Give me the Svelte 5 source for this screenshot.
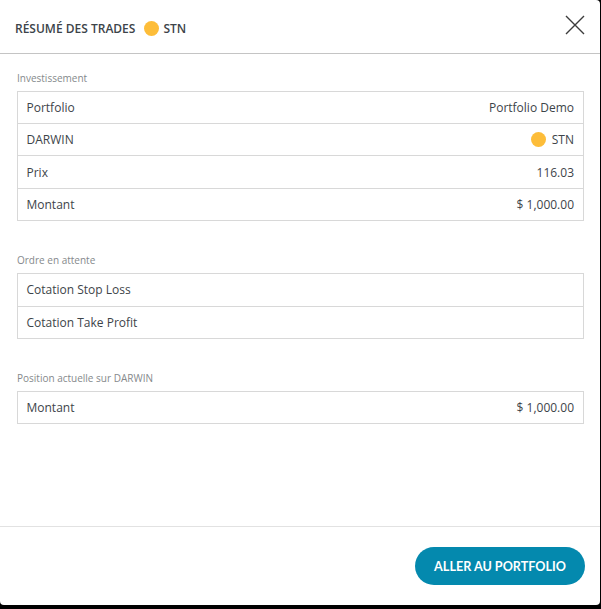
<script>
	const sections = [
		{
			title: 'Investissement',
			rows: [
				{ label: 'Portfolio', value: 'Portfolio Demo' },
				{ label: 'DARWIN', value: 'STN', dot: true },
				{ label: 'Prix', value: '116.03' },
				{ label: 'Montant', value: '$ 1,000.00' }
			]
		},
		{
			title: 'Ordre en attente',
			rows: [
				{ label: 'Cotation Stop Loss', value: '' },
				{ label: 'Cotation Take Profit', value: '' }
			]
		},
		{
			title: 'Position actuelle sur DARWIN',
			rows: [{ label: 'Montant', value: '$ 1,000.00' }]
		}
	];
</script>

<div class="modal">
	<header class="modal-header">
		<div class="title">
			<h2>RÉSUMÉ DES TRADES</h2>
			<span class="dot head-dot"></span>
			<span class="head-name">STN</span>
		</div>
		<button class="close" aria-label="Fermer">
			<svg width="20" height="20" viewBox="0 0 20 20">
				<path d="M1 1 L19 19 M19 1 L1 19" stroke="#3c3c3c" stroke-width="1.4" fill="none" />
			</svg>
		</button>
	</header>

	<div class="modal-body">
		{#each sections as section}
			<section class="group">
				<h3>{section.title}</h3>
				<div class="table">
					{#each section.rows as row}
						<div class="row">
							<span>{row.label}</span>
							<span class="value">
								{#if row.dot}<span class="dot"></span>{/if}
								{row.value}
							</span>
						</div>
					{/each}
				</div>
			</section>
		{/each}
	</div>

	<footer class="modal-footer">
		<button class="primary">ALLER AU PORTFOLIO</button>
	</footer>
</div>

<style>
	:global(body) {
		background: #000;
		font-family: 'Open Sans', sans-serif;
	}

	.modal {
		width: 600px;
		height: 605px;
		background: #fff;
		border-radius: 0 4px 4px 4px;
		display: flex;
		flex-direction: column;
		color: #3d4449;
	}

	.modal-header {
		height: 53px;
		border-bottom: 1px solid #c4c4c4;
		display: flex;
		align-items: center;
		justify-content: space-between;
		padding: 0 15px;
		flex-shrink: 0;
	}

	.title {
		display: flex;
		align-items: center;
		padding-top: 4px;
	}

	h2 {
		margin: 0;
		font-size: 12px;
		font-weight: 600;
		color: #3d4449;
	}

	.dot {
		width: 15px;
		height: 15px;
		border-radius: 50%;
		background: #fdbd39;
		display: inline-block;
	}

	.head-dot {
		margin-left: 9px;
	}

	.head-name {
		margin-left: 4px;
		font-size: 12px;
		font-weight: 600;
	}

	.close {
		background: none;
		border: none;
		padding: 0;
		width: 20px;
		height: 20px;
		display: flex;
		margin-bottom: 3px;
	}

	.modal-body {
		flex: 1;
		padding: 16.8px 16px 0 17px;
	}

	.group {
		margin-bottom: 32.1px;
	}

	h3 {
		margin: 0 0 5px;
		font-size: 10px;
		line-height: 15px;
		font-weight: 400;
		color: #85898c;
	}

	.table {
		border: 1px solid #d8d8d8;
		border-bottom: none;
	}

	.row {
		height: 31.33px;
		border-bottom: 1px solid #d8d8d8;
		display: flex;
		align-items: center;
		justify-content: space-between;
		padding: 0 9px 0 8.5px;
		font-size: 12px;
	}

	.value {
		display: flex;
		align-items: center;
		gap: 6px;
	}

	.modal-footer {
		height: 78px;
		border-top: 1px solid #e2e2e2;
		display: flex;
		align-items: center;
		justify-content: flex-end;
		padding-right: 15px;
		flex-shrink: 0;
	}

	.primary {
		width: 170px;
		height: 38px;
		border: none;
		border-radius: 19px;
		background: #0489ae;
		color: #fff;
		font-family: Lato, sans-serif;
		font-size: 12.6px;
		font-weight: 700;
		padding: 0;
	}
</style>
